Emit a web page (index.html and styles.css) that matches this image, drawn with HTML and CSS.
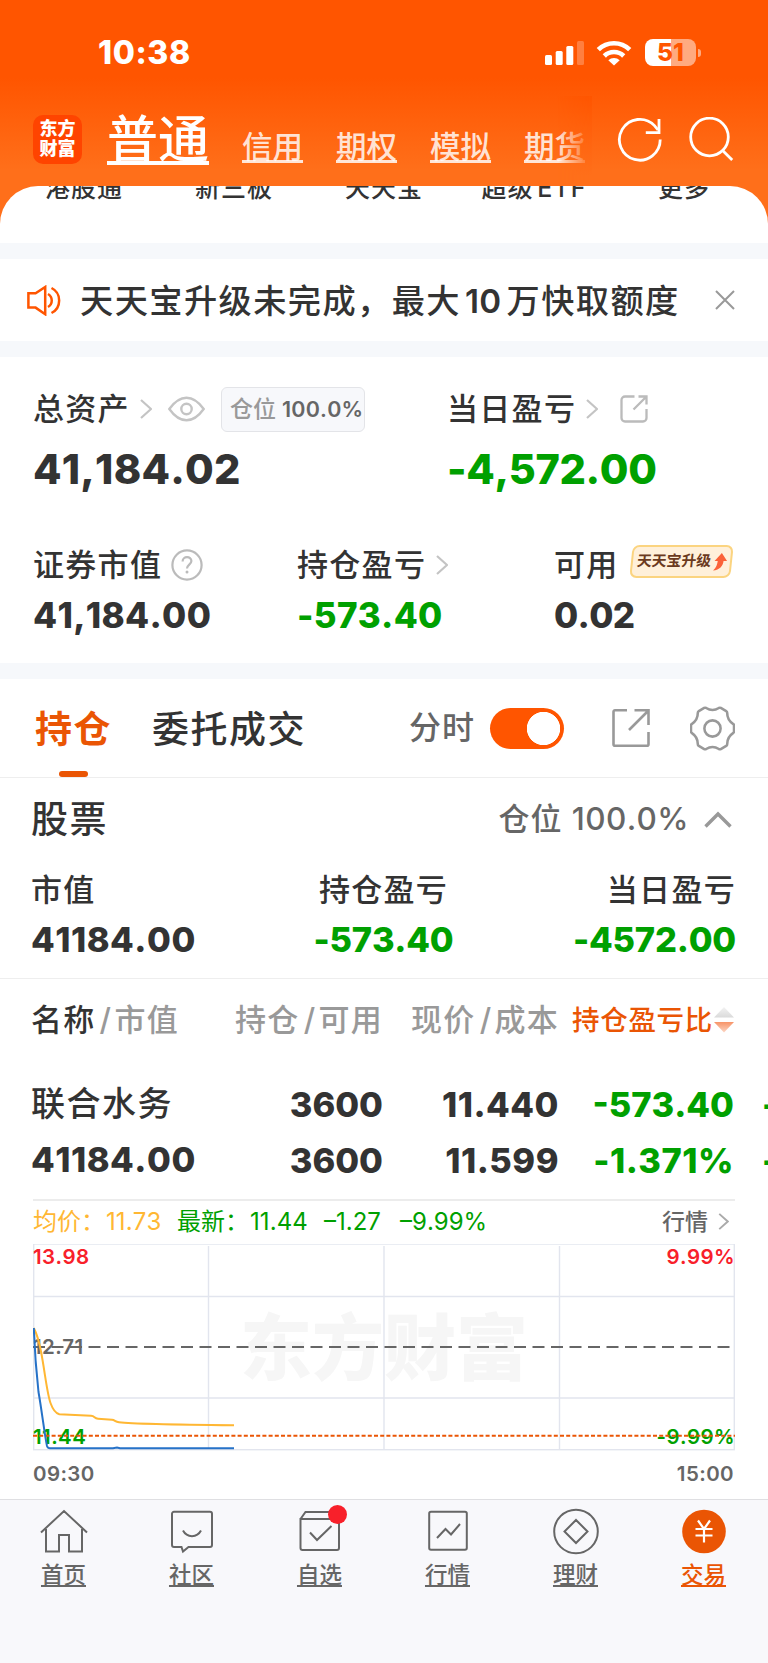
FILE: index.html
```html
<!DOCTYPE html>
<html lang="zh-CN">
<head>
  <meta charset="UTF-8">
  <title>交易 - 东方财富</title>
  <meta name="viewport" content="width=device-width, initial-scale=1.0">
  <link rel="stylesheet" href="styles.css">
</head>
<body>
  <div class="top">
    <!-- 状态栏 -->
    <div class="status-bar">
      <div class="status-time">10:38</div>
      <div class="status-icons">
        <svg class="signal" width="39" height="26" viewBox="0 0 39 26" fill="#fff">
          <rect x="0" y="15" width="7" height="10" rx="1.5"/>
          <rect x="10.7" y="11" width="7" height="14" rx="1.5"/>
          <rect x="21.3" y="6" width="7" height="19" rx="1.5"/>
          <rect x="32" y="1" width="7" height="24" rx="1.5" opacity=".25"/>
        </svg>
        <svg class="wifi" width="36" height="26" viewBox="0 0 36 26" fill="none" stroke="#fff" stroke-width="4.6">
          <path d="M2.3 9.6a22.5 22.5 0 0 1 31.4 0"/>
          <path d="M8.3 16a13.8 13.8 0 0 1 19.4 0"/>
          <path d="M12.3 20.2a8.2 8.2 0 0 1 11.4 0L18 25.6z" fill="#fff" stroke="none"/>
        </svg>
        <div class="battery"><span>51</span></div>
        <div class="battery-nub"></div>
      </div>
    </div>
    <!-- 顶部导航 -->
    <div class="nav">
      <div class="logo"><span>东方</span><span>财富</span></div>
      <div class="nav-tabs">
        <a class="nav-tab active">普通</a>
        <a class="nav-tab">信用</a>
        <a class="nav-tab">期权</a>
        <a class="nav-tab">模拟</a>
        <a class="nav-tab">期货</a>
      </div>
      <svg class="refresh" width="46" height="46" viewBox="0 0 46 46" fill="none" stroke="#fff" stroke-width="2.8">
        <path d="M43.2 23.5A20.4 20.4 0 1 1 37.5 9.6L41 14"/>
        <path d="M42 3v13.6H28.8"/>
      </svg>
      <svg class="search" width="46" height="46" viewBox="0 0 46 46" fill="none" stroke="#fff" stroke-width="2.8">
        <circle cx="21.5" cy="20" r="18.8"/>
        <path d="M34.6 33.4l9.6 9.6"/>
      </svg>
    </div>
    <div class="sheet">
      <div class="shortcuts">
        <span>港股通</span><span>新三板</span><span>天天宝</span><span>超级 ETF</span><span>更多</span>
      </div>
    </div>
  </div>

  <!-- 公告 -->
  <div class="notice">
    <svg width="34" height="31" viewBox="0 0 34 31" fill="none" stroke="#ff5500" stroke-width="2.5">
      <path d="M1.4 8.2h7.2L18.2 2v27.2L8.6 22.6H1.4z"/>
      <path d="M21 9c5 3 5 10 0 13M24.5 3c10.2 5 10.2 20 0 25"/>
    </svg>
    <div class="notice-text">天天宝升级未完成，最大<b>10</b>万快取额度</div>
    <svg class="close" width="20" height="20" viewBox="0 0 20 20" fill="none" stroke="#999" stroke-width="2">
      <path d="M1 1l18 18M19 1L1 19"/>
    </svg>
  </div>

  <!-- 资产 -->
  <div class="assets">
    <div class="grid-two row-a">
      <div class="cell">
        <span class="label">总资产</span>
        <svg class="chev" width="12" height="20" viewBox="0 0 12 20"><path d="M1 1l10 9-10 9"/></svg>
        <svg class="eye" width="37" height="26" viewBox="0 0 37 26" fill="none" stroke="#c4c4c4" stroke-width="2.4">
          <path d="M1.3 13C7 5 12.5 1.7 18.5 1.7S30 5 35.7 13C30 21 24.5 24.3 18.5 24.3S7 21 1.3 13z"/>
          <circle cx="18.5" cy="13" r="5.2"/>
        </svg>
        <span class="ratio">仓位 <b>100.0%</b></span>
      </div>
      <div class="cell">
        <span class="label">当日盈亏</span>
        <svg class="chev" width="12" height="20" viewBox="0 0 12 20"><path d="M1 1l10 9-10 9"/></svg>
        <svg class="share-sm" width="28" height="28" viewBox="0 0 28 28" fill="none" stroke="#bbb" stroke-width="2.3">
          <path d="M14.5 1.5H5A3.5 3.5 0 0 0 1.5 5v18A3.5 3.5 0 0 0 5 26.5h18a3.5 3.5 0 0 0 3.5-3.5v-9M18.5 1.5h8v8M26 2L13.5 14.5"/>
        </svg>
      </div>
    </div>
    <div class="grid-two row-b">
      <div class="num-xl">41,184.02</div>
      <div class="num-xl green">-4,572.00</div>
    </div>
    <div class="grid-three row-c">
      <div class="cell">
        <span class="label">证券市值</span>
        <svg class="help" width="32" height="32" viewBox="0 0 32 32" fill="none" stroke="#bbb" stroke-width="2.2">
          <circle cx="16" cy="16" r="14.6"/>
          <path d="M11.6 12.4c0-5.6 8.8-5.6 8.8-.4 0 3.6-4.4 3.8-4.4 7.6"/>
          <circle cx="16" cy="23" r="1.5" fill="#bbb" stroke="none"/>
        </svg>
      </div>
      <div class="cell">
        <span class="label">持仓盈亏</span>
        <svg class="chev" width="12" height="20" viewBox="0 0 12 20"><path d="M1 1l10 9-10 9"/></svg>
      </div>
      <div class="cell">
        <span class="label">可用</span>
        <span class="upgrade">
          <span>天天宝升级</span>
          <svg width="14" height="18" viewBox="0 0 14 18"><path d="M8 0l6 8h-3.5c0 5-3 9-9.5 9.5 3-3 3.5-6 3.7-9.5H1.5z" fill="#fb6238"/></svg>
        </span>
      </div>
    </div>
    <div class="grid-three row-d">
      <div class="num-lg">41,184.00</div>
      <div class="num-lg green">-573.40</div>
      <div class="num-lg">0.02</div>
    </div>
  </div>

  <!-- 持仓标签 -->
  <div class="tabs">
    <div class="tab active">持仓</div>
    <div class="tab">委托成交</div>
    <span class="switch-label">分时</span>
    <span class="switch"></span>
    <svg class="share" width="38" height="38" viewBox="0 0 38 38" fill="none" stroke="#999" stroke-width="2.6">
      <path d="M15 1.3H3a1.5 1.5 0 0 0-1.5 1.5v32.4a1.5 1.5 0 0 0 1.5 1.5h32a1.5 1.5 0 0 0 1.5-1.5V23M22.5 1.3h14V16M36 2L17 21"/>
    </svg>
    <svg class="gear" width="45" height="45" viewBox="0 0 46 46" fill="none" stroke="#999" stroke-width="2.6" stroke-linejoin="round">
      <circle cx="23" cy="23" r="8.3"/>
      <path d="M16.5 2c4 2.500 9 2.500 13 0q1-.5 2 0l5.500 3.200q1 .6 1 1.800c0 5 2.500 9 6 11.300q1 .6 1 1.700v6q0 1.100-1 1.700c-3.500 2.300-6 6.300-6 11.300q0 1.200-1 1.800L31.500 44q-1 .5-2 0c-4-2.500-9-2.500-13 0q-1 .5-2 0L9 40.800q-1-.6-1-1.800c0-5-2.500-9-6-11.300q-1-.6-1-1.700v-6q0-1.100 1-1.700C5.500 16 8 12 8 7q0-1.200 1-1.800L14.500 2q1-.5 2 0z"/>
    </svg>
  </div>

  <!-- 股票汇总 -->
  <div class="summary">
    <div class="summary-head">
      <div class="summary-title">股票</div>
      <div class="summary-ratio">仓位 <b>100.0%</b></div>
      <svg width="28" height="17" viewBox="0 0 28 17" fill="none" stroke="#999" stroke-width="3.4"><path d="M1.5 15.5L14 3l12.5 12.5"/></svg>
    </div>
    <div class="summary-row labels">
      <span>市值</span><span>持仓盈亏</span><span>当日盈亏</span>
    </div>
    <div class="summary-row values">
      <span>41184.00</span><span class="green">-573.40</span><span class="green">-4572.00</span>
    </div>
  </div>

  <!-- 持仓列表 -->
  <div class="holdings">
    <div class="cols cols-head">
      <div><em>名称</em><i>/</i>市值</div>
      <div>持仓<i>/</i>可用</div>
      <div>现价<i>/</i>成本</div>
      <div class="sort">
        <span>持仓盈亏比</span>
        <svg width="20" height="26" viewBox="0 0 20 26">
          <defs>
            <linearGradient id="up" x1="0" y1="0" x2="0" y2="1"><stop offset="0" stop-color="#f3f3f3"/><stop offset="1" stop-color="#dadada"/></linearGradient>
            <linearGradient id="down" x1="0" y1="0" x2="0" y2="1"><stop offset="0" stop-color="#f79468"/><stop offset="1" stop-color="#fcd6c4"/></linearGradient>
          </defs>
          <path d="M10 0l10 10.5H0z" fill="url(#up)"/>
          <path d="M0 15h20L10 25.5z" fill="url(#down)"/>
        </svg>
      </div>
    </div>
    <div class="cols cols-one">
      <div class="stock-name">联合水务</div>
      <div>3600</div>
      <div class="price">11.440</div>
      <div class="green">-573.40</div>
      <div class="green more">-</div>
    </div>
    <div class="cols cols-two">
      <div class="stock-value">41184.00</div>
      <div>3600</div>
      <div class="price">11.599</div>
      <div class="green pct-wide">-1.371%</div>
      <div class="green more">-</div>
    </div>
  </div>

  <!-- 分时图 -->
  <div class="chart-box">
    <div class="chart-info">
      <span class="avg">均价：<b>11.73</b></span>
      <span class="last">最新：<b>11.44</b></span>
      <span class="last diff">–1.27</span>
      <span class="last pct">–9.99%</span>
      <span class="quote">行情</span>
      <svg class="chev dark" width="11" height="17" viewBox="0 0 12 20"><path d="M1 1l10 9-10 9"/></svg>
    </div>
    <svg class="chart" width="702" height="208" viewBox="0 0 702 208">
      <text class="watermark" x="351" y="130" text-anchor="middle" textLength="288">东方财富</text>
      <g class="grid">
        <path d="M175.5 2v204M351 2v204M526.5 2v204M0 52.5h702M0 154h702"/>
        <rect x=".7" y="0" width="700.6" height="205.7"/>
      </g>
      <path class="base" d="M0 103h702"/>
      <text class="axis red" x="0" y="20">13.98</text>
      <text class="axis red" x="702" y="20" text-anchor="end">9.99%</text>
      <text class="axis gray" x="0" y="110">12.71</text>
      <text class="axis green" x="0" y="199.5">11.44</text>
      <text class="axis green" x="702" y="199.5" text-anchor="end">-9.99%</text>
      <path class="limit" d="M0 191.7h702"/>
      <path class="line-avg" d="M.8 84C4 90 6 97 8 107.5C12 128 14 150 17.7 159.5C20 166 22 169 26.3 170.3L58 171.7C62 172 61 174.3 65 174.7L79 175.8C82 176 82 178 86 178.3C100 180 130 180.6 201 181.3"/>
      <path class="line-price" d="M.8 84C2 116 3.5 130 5.5 148C9 168 11.5 190 14 202C14.5 203.7 15.5 204.3 17 204.3H80L84 203.6L87 204.3H201"/>
    </svg>
    <div class="chart-time"><span>09:30</span><span>15:00</span></div>
  </div>

  <!-- 底部导航 -->
  <div class="tabbar">
    <a class="bar-item">
      <svg width="48" height="48" viewBox="0 0 48 48">
        <path d="M1 24.5L24 3l23 21.5M6 21v22.5h13V27h10v16.5h13V21"/>
      </svg>
      <span>首页</span>
    </a>
    <a class="bar-item">
      <svg width="48" height="48" viewBox="0 0 48 48">
        <path d="M6 3.8h36a2 2 0 0 1 2 2V37a2 2 0 0 1-2 2H20.5l-5.5 4.5-1.5-4.5H6a2 2 0 0 1-2-2V5.8a2 2 0 0 1 2-2zM15 22.5c4 7.5 14 7.5 18 0"/>
      </svg>
      <span>社区</span>
    </a>
    <a class="bar-item">
      <svg width="48" height="48" viewBox="0 0 48 48">
        <path d="M4.5 11v29a2 2 0 0 0 2 2H41a2 2 0 0 0 2-2V11zM4.5 11l5-7H38l5 7M14 24.5l7 7.5 14.5-14"/>
      </svg>
      <i class="dot"></i>
      <span>自选</span>
    </a>
    <a class="bar-item">
      <svg width="48" height="48" viewBox="0 0 48 48">
        <path d="M7 3.8h34a1.8 1.8 0 0 1 1.8 1.8V40a1.8 1.8 0 0 1-1.8 1.8H7A1.8 1.8 0 0 1 5.2 40V5.6A1.8 1.8 0 0 1 7 3.8zM13 30l8.5-9 5.5 5.5 9-10.5"/>
      </svg>
      <span>行情</span>
    </a>
    <a class="bar-item">
      <svg width="48" height="48" viewBox="0 0 48 48">
        <circle cx="24" cy="23.5" r="21.8"/>
        <path d="M24 12l11.5 11.5L24 35 12.5 23.5z"/>
      </svg>
      <span>理财</span>
    </a>
    <a class="bar-item active">
      <svg width="48" height="48" viewBox="0 0 48 48">
        <circle class="fill" cx="24" cy="23.5" r="21.8"/>
        <path class="yen" d="M18 12.5l6 8.5 6-8.5M24 21v13.500M15.500 21h17M15.500 27.500h17"/>
      </svg>
      <span>交易</span>
    </a>
  </div>
</body>
</html>
```
FILE: styles.css
```css
* {
  box-sizing: border-box;
}

body {
  margin: 0;
  width: 768px;
  height: 1663px;
  overflow: hidden;
  background: #fff;
  color: #333;
  font-family: Inter, 'Noto Sans CJK SC', sans-serif;
  font-kerning: none;
  white-space: nowrap;
}

svg {
  display: block;
  flex: none;
}

b, i, em {
  font-style: normal;
}

.green {
  color: #00a000;
}

/* 顶部 */
.top {
  height: 243px;
  background: linear-gradient(180deg, #ff5500 0, #ff5500 78px, #ff6f1a 170px, #ff6f1a 100%);
}

.status-bar {
  height: 96px;
  padding: 9px 67px 0 98px;
  display: flex;
  align-items: center;
  justify-content: space-between;
  line-height: 32px;
}

.status-time {
  color: #fff;
  font-size: 32px;
  font-weight: 800;
  letter-spacing: 0.6px;
}

.status-icons {
  display: flex;
  align-items: center;
}

.wifi {
  margin-left: 12px;
}

.battery {
  width: 51px;
  height: 27px;
  margin-left: 13px;
  border-radius: 8px;
  background: linear-gradient(90deg, #fff 51%, rgba(255,255,255,0.5) 51%);
  color: #ff5500;
  font-size: 24.5px;
  font-weight: 800;
  line-height: 27px;
  text-align: center;
}

.battery-nub {
  width: 3px;
  height: 8px;
  margin-left: 2px;
  border-radius: 0 4px 4px 0;
  background: rgba(255,255,255,0.5);
}

.nav {
  height: 90px;
  padding-left: 33px;
  display: flex;
}

.logo {
  width: 49px;
  height: 49px;
  margin-top: 19px;
  padding-top: 4px;
  border-radius: 10px;
  background: #ff4400;
  color: #fff;
  font-size: 18px;
  font-weight: 900;
  line-height: 20px;
  text-align: center;
}

.logo span {
  display: block;
}

.nav-tabs {
  position: relative;
  width: 510px;
  height: 88px;
  padding-left: 25px;
  overflow: hidden;
  display: flex;
  align-items: baseline;
  gap: 33px;
}

.nav-tabs::after {
  content: "";
  position: absolute;
  top: 0;
  right: 0;
  width: 34px;
  height: 88px;
  background: linear-gradient(180deg, #ff5500, #ff6410 50%, #ff6f1a 90%);
  -webkit-mask-image: linear-gradient(90deg, transparent, #000);
  mask-image: linear-gradient(90deg, transparent, #000);
}

.nav-tab {
  color: rgba(255,255,255,0.83);
  font-size: 30.5px;
  font-weight: 500;
  line-height: 88px;
  text-decoration: underline;
  text-decoration-thickness: 2.5px;
  text-decoration-skip-ink: none;
  text-underline-offset: 2px;
}

.nav-tab.active {
  color: #fff;
  font-size: 51px;
  text-decoration-thickness: 4px;
  text-underline-offset: 3px;
}

.refresh {
  margin: 20px 0 0 25px;
}

.search {
  margin: 21px 0 0 25px;
}

.sheet {
  height: 57px;
  border-radius: 38px 38px 0 0;
  background: #fff;
  overflow: hidden;
}

.shortcuts {
  display: grid;
  grid-template-columns: repeat(5, 150px);
  margin: -14px 0 0 9px;
  font-size: 25px;
  font-weight: 500;
  letter-spacing: 1px;
  word-spacing: -4px;
  line-height: 32px;
  text-align: center;
}

/* 公告 */
.notice {
  height: 114px;
  border-top: 16px solid #f6f8fb;
  border-bottom: 16px solid #f6f8fb;
  padding: 0 33px 0 27px;
  display: flex;
  align-items: center;
}

.notice-text {
  margin-left: 19px;
  padding-top: 2px;
  font-size: 33.2px;
  font-weight: 500;
  letter-spacing: 1.45px;
  line-height: 48px;
}

.notice-text b {
  margin: 0 5px 0 4px;
  font-weight: 600;
  letter-spacing: 0.3px;
}

.close {
  margin-left: auto;
}

/* 资产 */
.assets {
  height: 322px;
  padding: 28px 0 0 33px;
  border-bottom: 16px solid #f6f8fb;
}

.grid-two {
  display: grid;
  grid-template-columns: 414px 1fr;
}

.grid-three {
  display: grid;
  grid-template-columns: 264px 257px 1fr;
}

.cell {
  display: flex;
  align-items: center;
}

.label {
  font-size: 31px;
  font-weight: 500;
  letter-spacing: 1.3px;
  line-height: 40px;
}

.row-a {
  height: 48px;
}

.row-b {
  height: 50px;
  margin-top: 11px;
}

.row-c {
  height: 40px;
  margin-top: 51px;
}

.row-d {
  height: 40px;
  margin-top: 10px;
}

.chev {
  margin-left: 10px;
  fill: none;
  stroke: #c4c4c4;
  stroke-width: 2.2;
}

.chev.dark {
  stroke: #aaa;
}

.eye {
  margin-left: 16px;
}

.ratio {
  width: 144px;
  height: 45px;
  margin-left: 16px;
  padding-left: 8px;
  border: 1px solid #e3e4e8;
  border-radius: 6px;
  background: #f7f8fb;
  color: #999;
  font-size: 23px;
  font-weight: 500;
  line-height: 43px;
}

.ratio b {
  color: #666;
  font-size: 21.5px;
  font-weight: 600;
  letter-spacing: 0.2px;
}

.share-sm {
  margin-left: 22px;
}

.num-xl {
  font-size: 41.5px;
  font-weight: 800;
  letter-spacing: 0.2px;
  line-height: 50px;
}

.num-xl.green {
  letter-spacing: -0.35px;
}

.num-lg {
  font-size: 35px;
  font-weight: 800;
  letter-spacing: 0.3px;
  line-height: 40px;
}

.num-lg:last-child {
  letter-spacing: -0.7px;
}

.help {
  margin-left: 9px;
}

.upgrade {
  width: 101px;
  height: 33px;
  margin: -8px 0 0 12px;
  padding-left: 4px;
  border: 2px solid #fbd480;
  border-radius: 7px;
  background: #fff0da;
  color: #6b3a20;
  font-size: 14.8px;
  font-weight: 700;
  line-height: 29px;
  display: flex;
  align-items: center;
  gap: 2px;
  transform: skewX(-6deg);
}

/* 标签栏 */
.tabs {
  height: 99px;
  padding-left: 35px;
  border-bottom: 1px solid #eee;
  display: flex;
  align-items: center;
}

.tab {
  position: relative;
  margin-right: 40px;
  padding-top: 3px;
  font-size: 37px;
  font-weight: 500;
  letter-spacing: 1.5px;
  line-height: 95px;
}

.tab.active {
  color: #ea5504;
  font-weight: 700;
}

.tab.active::after {
  content: "";
  position: absolute;
  left: 24px;
  bottom: 0;
  width: 29px;
  height: 6px;
  border-radius: 3px;
  background: #ea5504;
}

.switch-label {
  margin-left: auto;
  color: #666;
  font-size: 32px;
  font-weight: 500;
  letter-spacing: 1px;
  line-height: 40px;
}

.switch {
  width: 74px;
  height: 41px;
  margin-left: 15px;
  border-radius: 21px;
  background: radial-gradient(circle at 53.5px 20.5px, #fff 16.3px, #ff5500 17px);
}

.share {
  margin-left: 48px;
}

.gear {
  margin: 0 33px 0 40px;
}

/* 汇总 */
.summary {
  height: 201px;
  padding: 16px 32px 0 31px;
  border-bottom: 1px solid #eee;
}

.summary-head {
  height: 50px;
  display: flex;
  align-items: center;
  line-height: 50px;
}

.summary-title {
  padding-top: 1px;
  font-size: 37px;
  font-weight: 500;
  letter-spacing: 1.4px;
}

.summary-ratio {
  margin-left: auto;
  margin-right: 15px;
  color: #666;
  font-size: 31px;
  font-weight: 500;
  letter-spacing: 1px;
}

.summary-ratio b {
  font-size: 31.5px;
  font-weight: 500;
  letter-spacing: 0.4px;
}

.summary-head svg {
  margin-right: 4px;
}

.summary-row {
  display: grid;
  grid-template-columns: 200px 1fr 200px;
  line-height: 40px;
}

.summary-row span:nth-child(2) {
  text-align: center;
}

.summary-row span:nth-child(3) {
  text-align: right;
}

.labels {
  margin-top: 26px;
  font-size: 31px;
  font-weight: 500;
  letter-spacing: 1.3px;
}

.values {
  margin-top: 10px;
  font-size: 34.5px;
  font-weight: 800;
  letter-spacing: 0.5px;
}

.values .green {
  letter-spacing: -0.2px;
}

/* 持仓列表 */
.holdings {
  height: 220px;
  padding: 21px 0 0 31px;
}

.cols {
  display: grid;
  grid-template-columns: 170px 182px 176px 175px 1fr;
  line-height: 40px;
  text-align: right;
  font-size: 34.5px;
  font-weight: 800;
}

.cols > div:first-child {
  text-align: left;
}

.cols-head {
  color: #999;
  font-size: 31px;
  font-weight: 500;
  letter-spacing: 1.3px;
}

.cols-head em {
  color: #333;
}

.cols-head i {
  margin: 0 2px 0 4px;
}

.sort {
  display: flex;
  align-items: center;
  justify-content: flex-end;
  gap: 1px;
  color: #ea5504;
  font-size: 27.5px;
  letter-spacing: 0.7px;
}

.cols-one {
  margin-top: 45px;
}

.cols-two {
  margin-top: 16px;
}

.price,
.pct-wide {
  letter-spacing: 0.5px;
}

.cols .stock-name {
  margin-top: -1px;
  font-size: 34px;
  font-weight: 500;
  letter-spacing: 1.5px;
}

.cols .stock-value {
  margin-top: -1px;
  letter-spacing: 0.5px;
}

.cols .more {
  padding-left: 28px;
  text-align: left;
}

/* 分时图 */
.chart-box {
  width: 702px;
  height: 300px;
  margin-left: 33px;
  border-top: 2px solid #ececec;
}

.chart-info {
  height: 43px;
  padding: 0 6px 2px 0;
  display: flex;
  align-items: center;
  font-size: 24px;
  line-height: 40px;
}

.chart-info b {
  margin-left: 1px;
  font-weight: 400;
  letter-spacing: 0.1px;
}

.avg {
  width: 144px;
  color: #ffb733;
}

.last {
  width: 147px;
  color: #00a000;
}

.diff {
  width: 76px;
}

.pct {
  width: 100px;
}

.quote {
  margin-left: auto;
  color: #666;
  font-size: 23px;
  font-weight: 500;
}

.grid path,
.grid rect {
  fill: none;
  stroke: #e2e5ee;
  stroke-width: 1.4;
}

.base {
  stroke: #666;
  stroke-width: 2;
  stroke-dasharray: 12 6.5;
}

.limit {
  stroke: #ea5504;
  stroke-width: 2;
  stroke-dasharray: 4 2.2;
}

.watermark {
  fill: #f6f6f6;
  font-size: 72px;
  font-weight: 900;
}

.axis {
  font-size: 20.5px;
  font-weight: 600;
  letter-spacing: 0.4px;
}

.axis.red {
  fill: #f8202a;
}

.axis.gray {
  fill: #666;
}

.axis.green {
  fill: #00a000;
}

.line-avg {
  fill: none;
  stroke: #ffb733;
  stroke-width: 2;
}

.line-price {
  fill: none;
  stroke: #2672c8;
  stroke-width: 2;
}

.chart-time {
  display: flex;
  justify-content: space-between;
  padding: 7px 1px 0 0;
  color: #666;
  font-size: 20.5px;
  font-weight: 600;
  letter-spacing: 0.4px;
  line-height: 30px;
}

/* 底部导航 */
.tabbar {
  height: 164px;
  padding-top: 8px;
  border-top: 1px solid #dfdfe2;
  background: #f8f8fb;
  display: grid;
  grid-template-columns: repeat(6, 128px);
}

.bar-item {
  position: relative;
  display: flex;
  flex-direction: column;
  align-items: center;
  padding-right: 1px;
  color: #666;
  font-size: 22.5px;
  font-weight: 500;
  line-height: 30px;
}

.bar-item svg {
  fill: none;
  stroke: #666;
  stroke-width: 2;
}

.bar-item span {
  margin-top: 4px;
  text-decoration: underline;
  text-decoration-thickness: 1.5px;
  text-decoration-skip-ink: none;
  text-underline-offset: 2px;
}

.dot {
  position: absolute;
  left: 72px;
  top: -3px;
  width: 19px;
  height: 19px;
  border-radius: 50%;
  background: #f8202a;
}

.bar-item.active {
  color: #ea5504;
}

.bar-item.active .fill {
  fill: #ea5504;
  stroke: none;
}

.bar-item.active .yen {
  stroke: #fff;
  stroke-width: 2.2;
}
```
